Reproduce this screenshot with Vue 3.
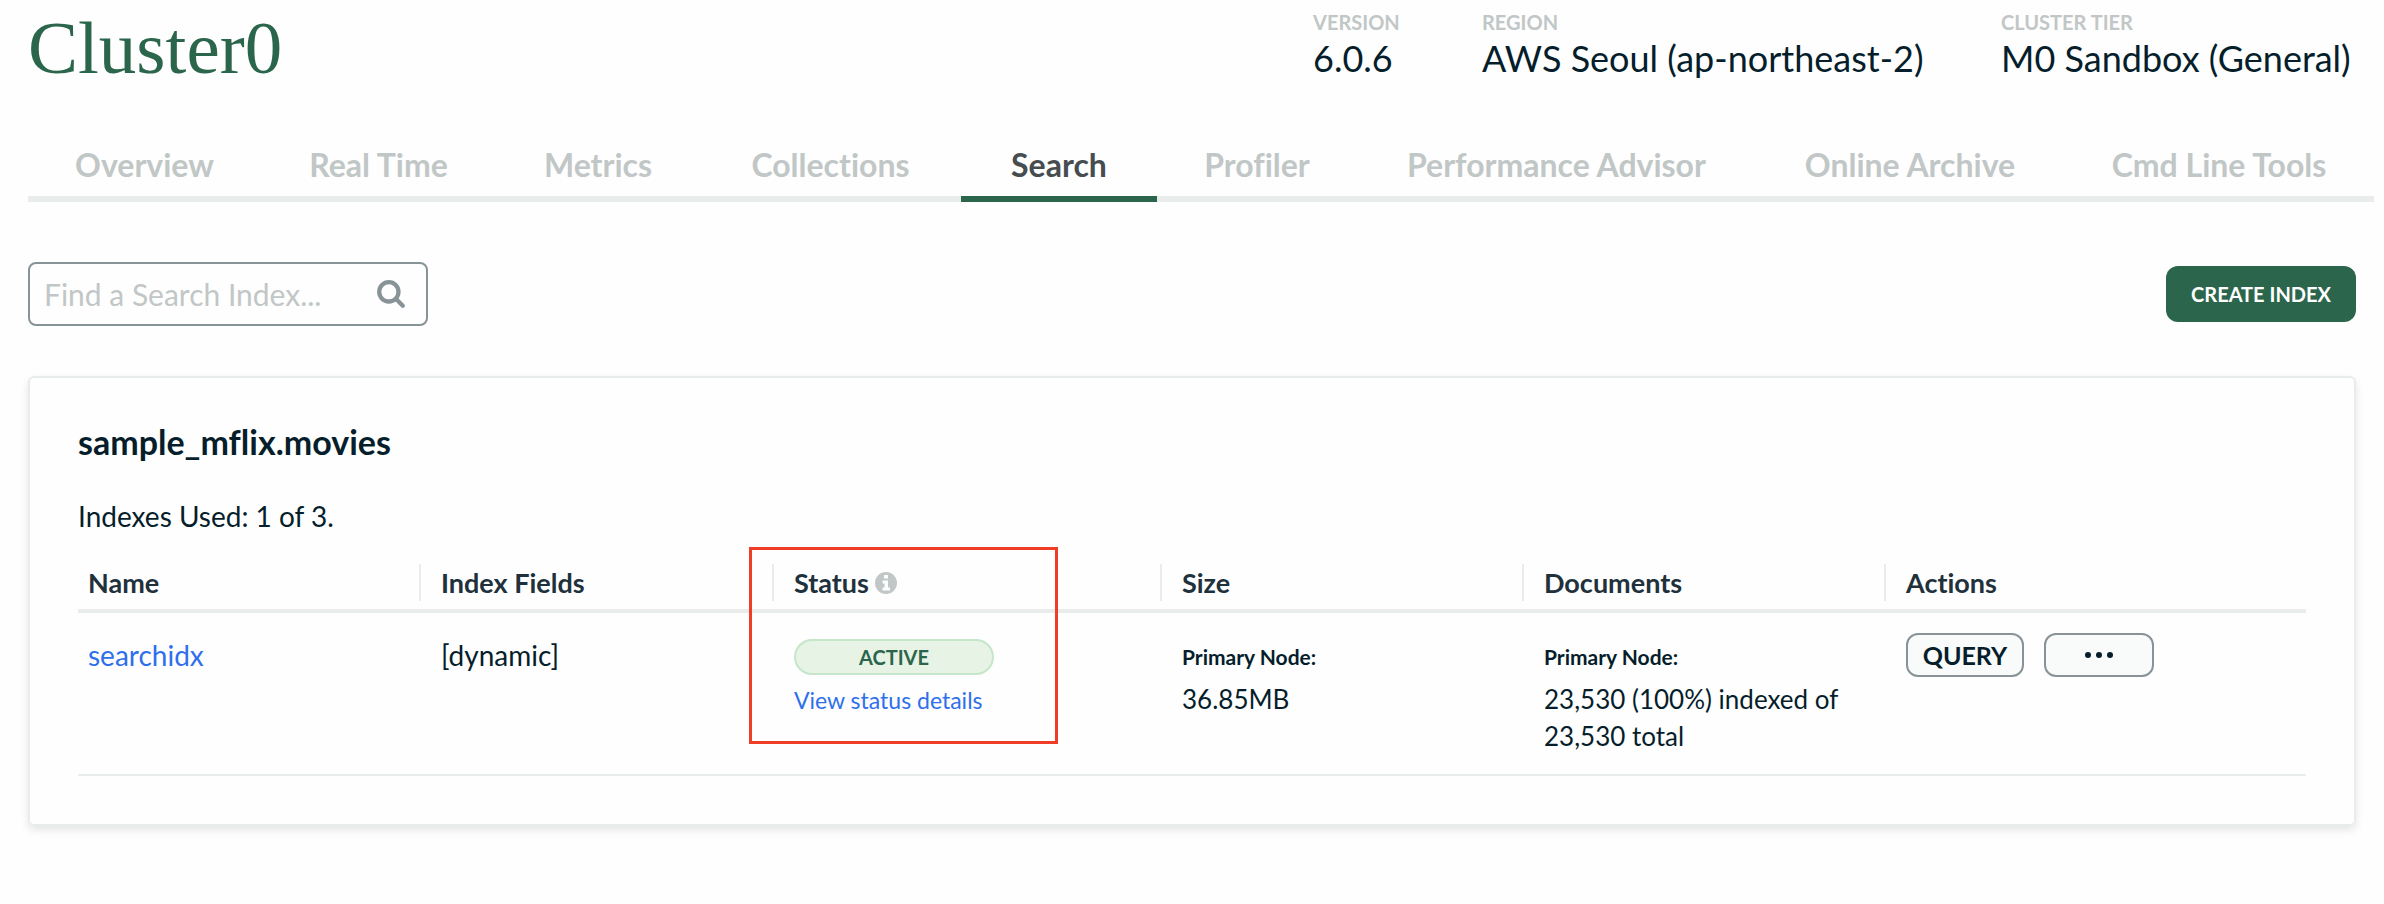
<script setup>
import { ref } from 'vue'

const query = ref('')

const facts = [
  { label: 'VERSION', value: '6.0.6' },
  { label: 'REGION', value: 'AWS Seoul (ap-northeast-2)' },
  { label: 'CLUSTER TIER', value: 'M0 Sandbox (General)' },
]

const tabs = [
  'Overview',
  'Real Time',
  'Metrics',
  'Collections',
  'Search',
  'Profiler',
  'Performance Advisor',
  'Online Archive',
  'Cmd Line Tools',
]
const activeTab = ref('Search')
</script>

<template>
  <main class="page">
    <header class="header">
      <h1 class="title">Cluster0</h1>
      <dl class="facts">
        <div v-for="fact in facts" :key="fact.label" class="fact">
          <dt>{{ fact.label }}</dt>
          <dd>{{ fact.value }}</dd>
        </div>
      </dl>
    </header>

    <nav class="tabs" aria-label="Cluster sections">
      <a
        v-for="tab in tabs"
        :key="tab"
        href="#"
        class="tab"
        :class="{ active: tab === activeTab }"
        @click.prevent="activeTab = tab"
      >{{ tab }}</a>
    </nav>

    <div class="toolbar">
      <label class="search">
        <input v-model="query" type="text" aria-label="Find a Search Index" placeholder="Find a Search Index..." />
        <svg class="search-icon" viewBox="0 0 28 28" aria-hidden="true">
          <circle cx="12" cy="12" r="9" />
          <path d="M18.5 18.5L25 25" />
        </svg>
      </label>
      <button type="button" class="create">CREATE INDEX</button>
    </div>

    <section class="card">
      <h2 class="namespace">sample_mflix.movies</h2>
      <p class="usage">Indexes Used: 1 of 3.</p>

      <table class="indexes">
        <colgroup>
          <col class="col-name" />
          <col class="col-fields" />
          <col class="col-status" />
          <col class="col-size" />
          <col class="col-documents" />
          <col class="col-actions" />
        </colgroup>
        <thead>
          <tr>
            <th scope="col"><div class="head">Name</div></th>
            <th scope="col"><div class="head">Index Fields</div></th>
            <th scope="col" class="status-head">
              <div class="head">
                Status
                <svg class="info" viewBox="0 0 22 22" aria-hidden="true">
                  <circle cx="11" cy="11" r="11" fill="#c1c7c6" />
                  <path d="M9 3h4v3.5H9zM7.5 8.5H13v7h2v3H7.5v-3h2v-4h-2z" fill="#fefefe" />
                </svg>
              </div>
              <span class="highlight"></span>
            </th>
            <th scope="col"><div class="head">Size</div></th>
            <th scope="col"><div class="head">Documents</div></th>
            <th scope="col"><div class="head">Actions</div></th>
          </tr>
        </thead>
        <tbody>
          <tr>
            <td class="primary"><a href="#" class="link">searchidx</a></td>
            <td class="primary">[dynamic]</td>
            <td>
              <span class="badge">ACTIVE</span>
              <a href="#" class="link details">View status details</a>
            </td>
            <td>
              <strong class="node">Primary Node:</strong>
              <div class="amount">36.85MB</div>
            </td>
            <td>
              <strong class="node">Primary Node:</strong>
              <div class="amount">23,530 (100%) indexed of 23,530 total</div>
            </td>
            <td>
              <div class="actions">
                <button type="button" class="action">QUERY</button>
                <button type="button" class="action more" aria-label="More actions">
                  <svg viewBox="0 0 30 8" aria-hidden="true">
                    <circle cx="4" cy="4" r="3" />
                    <circle cx="15" cy="4" r="3" />
                    <circle cx="26" cy="4" r="3" />
                  </svg>
                </button>
              </div>
            </td>
          </tr>
        </tbody>
      </table>
    </section>
  </main>
</template>

<style>
body {
  background: #fefefe;
}
</style>

<style scoped>
.page {
  padding: 0 28px 40px;
  font-family: Lato, "Liberation Sans", sans-serif;
  font-variant-ligatures: none;
  color: #061e2b;
}

.page * {
  box-sizing: border-box;
}

.header {
  display: flex;
  justify-content: space-between;
  align-items: flex-start;
  height: 136px;
}

.title {
  margin: 6px 0 0;
  font: 400 75px/84px "Liberation Serif", serif;
  color: #2b664c;
}

.facts {
  display: grid;
  grid-template-columns: 88px 438px 355px;
  gap: 81px;
  margin: 8px 0 0;
}

.fact {
  white-space: nowrap;
}

.fact dt {
  font-size: 20px;
  line-height: 28px;
  font-weight: 700;
  color: #c1c7c6;
}

.fact dd {
  margin: 2px 0 0;
  font-size: 36px;
  line-height: 40px;
}

.tabs {
  display: grid;
  grid-template-columns: 233fr 235fr 204fr 261fr 196fr 200fr 399fr 308fr 310fr;
  margin-right: -18px;
}

.tab {
  height: 66px;
  padding-bottom: 2px;
  border-bottom: 6px solid #e8edeb;
  font-size: 32px;
  line-height: 58px;
  font-weight: 700;
  text-align: center;
  text-decoration: none;
  white-space: nowrap;
  color: #c1c7c6;
}

.tab.active {
  border-color: #2b664c;
  color: #464c4f;
}

.toolbar {
  display: flex;
  justify-content: space-between;
  align-items: center;
  margin-top: 60px;
}

.search {
  display: flex;
  align-items: center;
  width: 400px;
  height: 64px;
  padding: 0 20px 0 14px;
  border: 2px solid #889397;
  border-radius: 8px;
}

.search input {
  flex: 1;
  min-width: 0;
  padding: 0;
  border: 0;
  outline: 0;
  background: none;
  font: 400 30px/40px Lato, "Liberation Sans", sans-serif;
  color: inherit;
}

.search input::placeholder {
  color: #c1c7c6;
  opacity: 1;
}

.search-icon {
  width: 30px;
  height: 30px;
  fill: none;
  stroke: #889397;
  stroke-width: 4;
  stroke-linecap: round;
}

.create {
  width: 190px;
  height: 56px;
  padding: 0;
  border: 0;
  border-radius: 12px;
  background: #2b664c;
  font: 700 20px/24px Lato, "Liberation Sans", sans-serif;
  color: #fff;
}

.card {
  margin-top: 50px;
  padding: 42px 48px 48px;
  border: 2px solid #e8edeb;
  border-radius: 6px;
  box-shadow: 0 4px 8px rgba(0, 0, 0, 0.1);
}

.namespace {
  margin: 0;
  font-size: 34px;
  line-height: 44px;
  font-weight: 700;
}

.usage {
  margin: 34px 0 0;
  font-size: 28px;
  line-height: 36px;
}

.indexes {
  width: 100%;
  margin-top: 20px;
  border-collapse: separate;
  border-spacing: 0;
  table-layout: fixed;
  font-size: 26px;
  line-height: 37px;
}

.col-name { width: 341px; }
.col-fields { width: 353px; }
.col-status { width: 388px; }
.col-size { width: 362px; }
.col-documents { width: 362px; }
.col-actions { width: auto; }

.indexes th {
  padding: 10px 0 8px;
  border-bottom: 4px solid #e8edeb;
  text-align: left;
  font-size: 27px;
  font-weight: 700;
  color: #21313c;
}

.head {
  display: flex;
  align-items: center;
  gap: 6px;
  height: 37px;
  padding-left: 20px;
  border-left: 2px solid #e8edeb;
}

.indexes th:first-child .head {
  padding-left: 10px;
  border-left: 0;
}

.info {
  width: 22px;
  height: 22px;
}

.status-head {
  position: relative;
}

.highlight {
  position: absolute;
  top: -7px;
  left: -23px;
  width: 309px;
  height: 197px;
  border: 3px solid #ef3e25;
  pointer-events: none;
}

.indexes td {
  height: 163px;
  padding: 24px 22px 12px;
  border-bottom: 2px solid #e8edeb;
  vertical-align: top;
}

.indexes td:first-child {
  padding-left: 10px;
}

.indexes td:last-child {
  padding-top: 20px;
}

.indexes .primary {
  font-size: 28px;
}

.link {
  color: #2f6fec;
  text-decoration: none;
}

.badge {
  display: block;
  width: 200px;
  height: 36px;
  margin-top: 2px;
  border: 2px solid #c6e6c9;
  border-radius: 18px;
  background: #e7f3e5;
  font-size: 20px;
  line-height: 32px;
  font-weight: 700;
  text-align: center;
  color: #2b664c;
}

.details {
  display: block;
  margin-top: 8px;
  font-size: 23px;
  line-height: 34px;
}

.node {
  display: block;
  font-size: 21px;
  line-height: 40px;
}

.amount {
  margin-top: 4px;
}

.actions {
  display: flex;
  gap: 20px;
}

.action {
  display: flex;
  align-items: center;
  justify-content: center;
  width: 118px;
  height: 44px;
  padding: 0;
  border: 2px solid #889397;
  border-radius: 12px;
  background: #f9fbfa;
  font: 700 25px/32px Lato, "Liberation Sans", sans-serif;
  color: #061e2b;
}

.more {
  width: 110px;
}

.more svg {
  width: 30px;
  height: 8px;
  fill: #061e2b;
}
</style>
